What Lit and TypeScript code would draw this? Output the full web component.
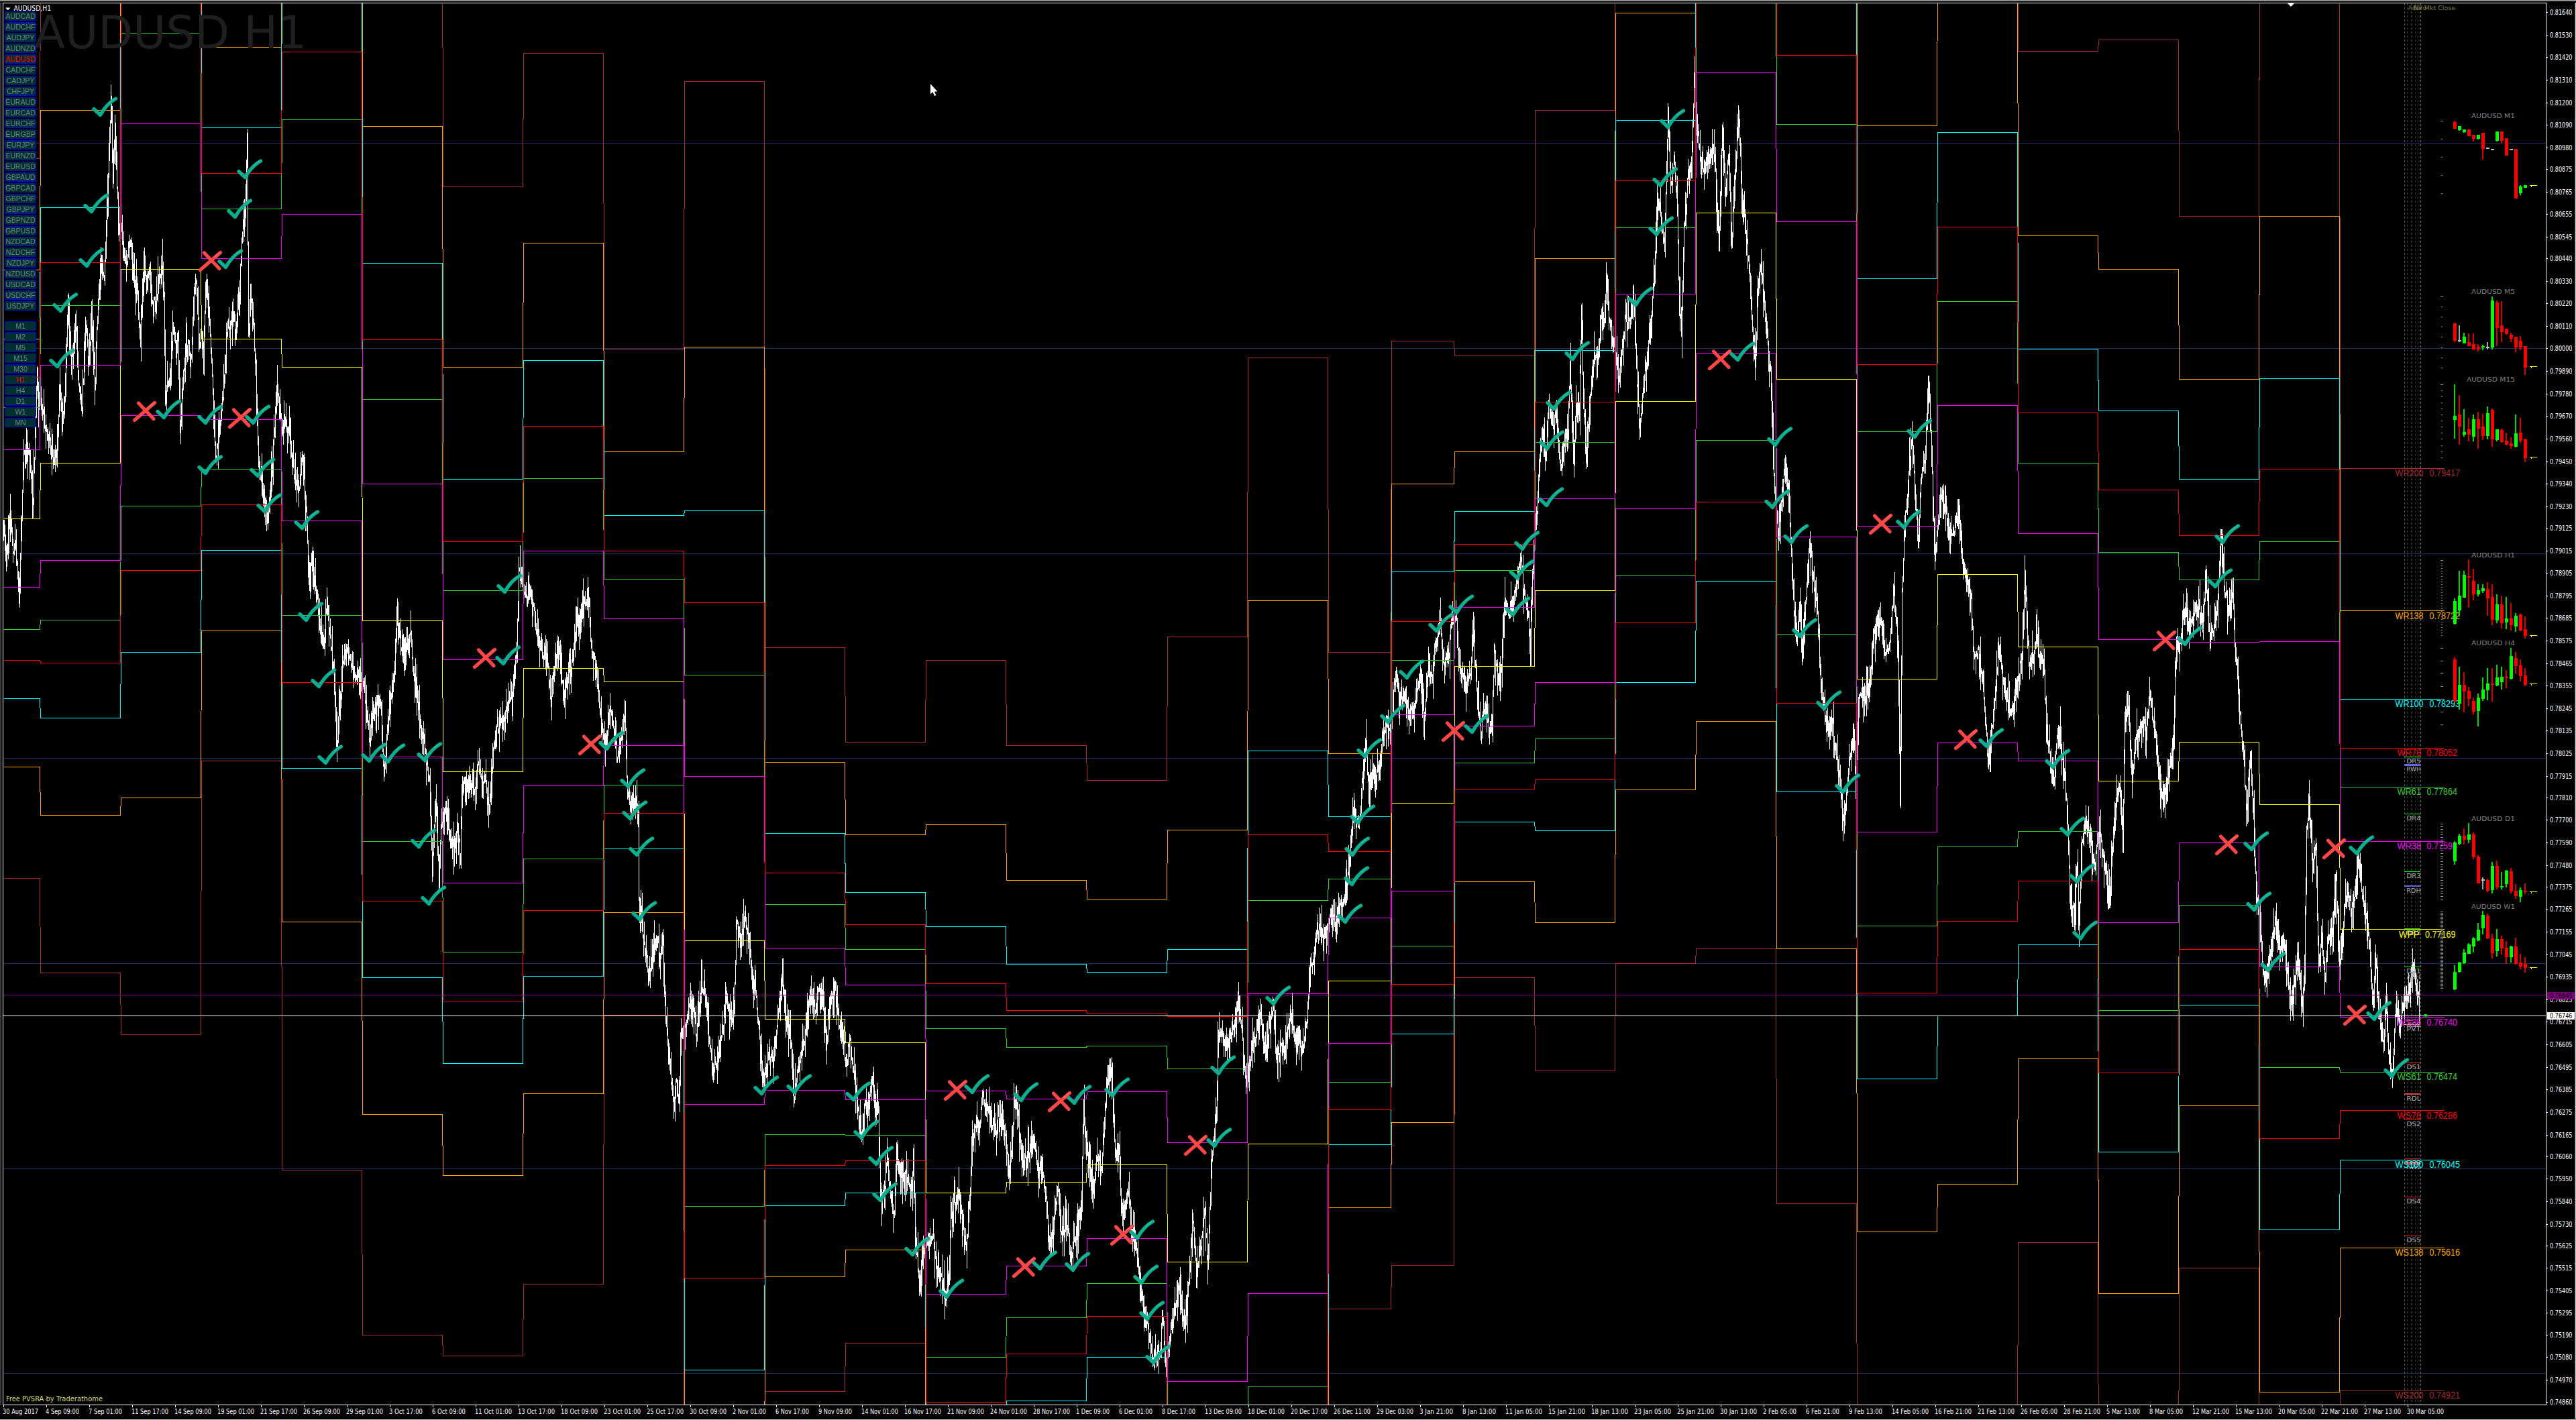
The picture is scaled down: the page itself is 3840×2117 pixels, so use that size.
import { LitElement, html, svg, css } from 'lit';
import { customElement, property, state } from 'lit/decorators.js';
import { classMap } from 'lit/directives/class-map.js';

const PAIRS = ['AUDCAD', 'AUDCHF', 'AUDJPY', 'AUDNZD', 'AUDUSD', 'CADCHF', 'CADJPY', 'CHFJPY', 'EURAUD', 'EURCAD',
    'EURCHF', 'EURGBP', 'EURJPY', 'EURNZD', 'EURUSD', 'GBPAUD', 'GBPCAD', 'GBPCHF', 'GBPJPY', 'GBPNZD', 'GBPUSD',
    'NZDCAD', 'NZDCHF', 'NZDJPY', 'NZDUSD', 'USDCAD', 'USDCHF', 'USDJPY'];

const TIMEFRAMES = ['M1', 'M2', 'M5', 'M15', 'M30', 'H1', 'H4', 'D1', 'W1', 'MN'];

const PRICES = `0.81640 0.81530 0.81420 0.81310 0.81200 0.81090 0.80980 0.80875 0.80765 0.80655 0.80545 0.80440 0.80330
0.80220 0.80110 0.80000 0.79890 0.79780 0.79670 0.79560 0.79450 0.79340 0.79230 0.79125 0.79015 0.78905 0.78795 0.78685
0.78575 0.78465 0.78355 0.78245 0.78135 0.78025 0.77915 0.77810 0.77700 0.77590 0.77480 0.77375 0.77265 0.77155 0.77045
0.76935 0.76825 0.76715 0.76605 0.76495 0.76385 0.76275 0.76165 0.76060 0.75950 0.75840 0.75730 0.75625 0.75515 0.75405
0.75295 0.75190 0.75080 0.74970 0.74860`.split(/\s+/);

const DATES = ['30 Aug 2017', '4 Sep 09:00', '7 Sep 01:00', '11 Sep 17:00', '14 Sep 09:00', '19 Sep 01:00', '21 Sep 17:00',
    '26 Sep 09:00', '29 Sep 01:00', '3 Oct 17:00', '6 Oct 09:00', '11 Oct 01:00', '13 Oct 17:00', '18 Oct 09:00',
    '23 Oct 01:00', '25 Oct 17:00', '30 Oct 09:00', '2 Nov 01:00', '6 Nov 17:00', '9 Nov 09:00', '14 Nov 01:00',
    '16 Nov 17:00', '21 Nov 09:00', '24 Nov 01:00', '28 Nov 17:00', '1 Dec 09:00', '6 Dec 01:00', '8 Dec 17:00',
    '13 Dec 09:00', '18 Dec 01:00', '20 Dec 17:00', '26 Dec 11:00', '29 Dec 03:00', '3 Jan 21:00', '8 Jan 13:00',
    '11 Jan 05:00', '15 Jan 21:00', '18 Jan 13:00', '23 Jan 05:00', '25 Jan 21:00', '30 Jan 13:00', '2 Feb 05:00',
    '6 Feb 21:00', '9 Feb 13:00', '14 Feb 05:00', '16 Feb 21:00', '21 Feb 13:00', '26 Feb 05:00', '28 Feb 21:00',
    '5 Mar 13:00', '8 Mar 05:00', '12 Mar 21:00', '15 Mar 13:00', '20 Mar 05:00', '22 Mar 21:00', '27 Mar 13:00',
    '30 Mar 05:00'];

// weekly pivots: left edge, pivot y, range of the previous week (px)
const WEEKS = [
    [5, 772.7, 268.2], [60, 689.5, 380.2], [180, 401.4, 570.2], [300, 505, 314.6], [420, 547.3, 598.1],
    [540, 924.5, 532.9], [660, 1149.6, 435.8], [780, 996.1, 458.8], [900, 1016.4, 248.4], [1020, 1401.8, 640.5],
    [1140, 1519.4, 277.3], [1260, 1553.9, 224], [1380, 1777.7, 396.7], [1500, 1762.4, 325.6], [1620, 1736.1, 286.8],
    [1740, 1881.4, 466], [1860, 1704.6, 586], [1980, 1461.6, 244.8], [2074, 1196.6, 344.5], [2168, 993.4, 231.8],
    [2288, 880.2, 358], [2408, 598.3, 419], [2528, 317.4, 548.2], [2648, 565.2, 614.5], [2768, 1011.7, 596.4],
    [2888, 855.5, 658.3], [3008, 964.4, 444], [3128, 1164.2, 552.6], [3248, 1106.4, 392], [3368, 1198.6, 634.3],
    [3488, 1385.2, 343.6]
];
const LAST_X = 3644;

// painted in this order, so 78% ends up on top
const LEVELS: [number, string][] = [
    [2, '#a52a2a'], [1.382, '#ffa500'], [1, '#00ffff'], [0, '#ffff00'], [0.618, '#32cd32'], [0.382, '#ff00ff'], [0.786, '#ff0000']
];

const WEEK_LABELS: [string, string, number, string][] = [
    ['WR200', '0.79417', 697.5, '#a52a2a'], ['WR138', '0.78722', 910.5, '#ffa500'], ['WR100', '0.78293', 1041.5, '#00ffff'],
    ['WR78', '0.78052', 1114.5, '#ff0000'], ['WR61', '0.77864', 1172.5, '#32cd32'], ['WR38', '0.77598', 1253.5, '#ff00ff'],
    ['WPP', '0.77169', 1385.5, '#ffff00'], ['WS38', '0.76740', 1516.5, '#ff00ff'], ['WS61', '0.76474', 1597.5, '#32cd32'],
    ['WS78', '0.76286', 1655.5, '#ff0000'], ['WS100', '0.76045', 1728.5, '#00ffff'], ['WS138', '0.75616', 1859.5, '#ffa500'],
    ['WS200', '0.74921', 2072.5, '#a52a2a']
];

const DAY_LABELS: [string, number, string, number][] = [
    ['DR5', 1128.5, '#00ff00', 1], ['RWH', 1140.5, '#6464e6', 3], ['DR4', 1213.5, '#00ff00', 1], ['DR3', 1299.5, '#00ff00', 1],
    ['RDH', 1321, '#6464e6', 2], ['DR2', 1384.5, '#00ff00', 1], ['DR1', 1441.5, '#00ff00', 1], ['ASH', 1450.5, '#6464e6', 1],
    ['ASL', 1521.5, '#e04040', 1], ['PVT', 1527.5, '#ffff00', 1], ['DS1', 1584.5, '#ff0000', 1], ['RDL', 1631, '#e04040', 2],
    ['DS2', 1669.5, '#ff0000', 1], ['DS3', 1727.5, '#ff0000', 1], ['RWL', 1733.5, '#e04040', 3], ['DS4', 1784.5, '#ff0000', 1],
    ['DS5', 1842.5, '#ff0000', 1]
];

const nums = (s: string) => s.trim().split(/[\s,]+/).map(Number);
const pairs = (s: string) => {
    const n = nums(s), out: number[][] = [];
    for (let i = 0; i < n.length; i += 2) out.push([n[i], n[i + 1]]);
    return out;
};

const PATH = pairs(`5,777 9,831 15,764 18,811 23,818 28,895 31,798 35,676 41,676 46,710 49,745 54,581 60,602 63,612 69,642
75,666 84,692 89,575 92,642 96,595 101,448 106,534 112,476 116,554 122,608 127,487 132,534 136,473 141,580 145,473
150,400 155,415 158,350 161,260 165,146 168,257 171,185 176,331 181,338 183,375 188,395 194,360 197,400 200,420 204,430
209,505 214,385 218,430 223,400 228,460 233,440 238,410 242,392 244,440 246,600 250,570 254,560 257,485 262,520 265,500
268,630 271,590 276,520 280,510 283,545 286,510 289,430 292,420 296,510 300,500 303,530 306,425 309,440 313,500 316,560
319,640 322,685 326,640 330,610 334,560 338,500 343,480 347,470 351,505 354,460 357,430 360,360 363,330 366,290 368,207
370,500 373,425 377,480 381,540 384,660 388,710 393,737 399,778 402,744 407,662 413,578 419,642 425,629 433,662 439,710
445,730 451,685 457,784 461,879 464,831 470,879 476,926 482,965 487,892 493,967 497,1000 502,1110 507,1041 513,962 520,980
528,1007 533,1000 540,1014 545,1055 551,1110 557,1057 562,1041 568,1065 572,1155 576,1098 580,1050 586,1014 592,920
598,967 605,960 612,942 617,1014 624,1055 631,1098 635,1138 640,1158 644,1285 650,1199 654,1322 657,1233 664,1199
670,1246 676,1275 681,1240 686,1275 689,1179 696,1165 706,1179 712,1138 718,1179 724,1165 729,1210 733,1145 739,1091
746,1075 754,1057 759,1041 765,1021 770,980 773,850 779,872 785,892 791,880 797,926 804,960 810,980 816,994 820,1040
827,987 834,968 840,1040 846,1007 854,980 860,915 865,940 869,890 877,892 882,980 886,980 892,1041 897,1090 903,1111
909,1060 914,1084 920,1130 926,1098 931,1057 935,1185 941,1199 947,1192 951,1206 952,1341 957,1370 961,1420 967,1455
973,1422 980,1398 983,1440 987,1392 992,1517 996,1557 1003,1640 1007,1611 1012,1640 1015,1544 1021,1530 1027,1500
1032,1485 1038,1550 1045,1462 1053,1496 1061,1600 1070,1571 1078,1530 1082,1480 1087,1517 1094,1510 1097,1380 1105,1409
1110,1360 1116,1395 1122,1476 1126,1483 1131,1530 1136,1611 1142,1605 1146,1564 1153,1580 1159,1517 1166,1455 1172,1517
1179,1557 1183,1642 1188,1598 1194,1571 1198,1557 1202,1523 1208,1485 1214,1510 1220,1476 1226,1490 1231,1562 1237,1496
1244,1466 1251,1530 1255,1537 1261,1584 1267,1550 1272,1591 1278,1652 1284,1696 1289,1645 1295,1652 1299,1608 1304,1645
1309,1652 1312,1787 1318,1790 1322,1715 1327,1785 1333,1808 1336,1735 1344,1753 1352,1760 1359,1774 1361,1730 1365,1855
1371,1922 1376,1868 1382,1855 1390,1845 1396,1889 1402,1902 1408,1932 1414,1909 1417,1801 1423,1794 1430,1780 1434,1834
1440,1862 1445,1787 1449,1706 1454,1679 1460,1679 1465,1634 1469,1659 1477,1665 1483,1690 1491,1662 1498,1692 1505,1750
1509,1679 1514,1630 1518,1679 1523,1730 1529,1733 1535,1715 1541,1696 1547,1750 1552,1730 1558,1774 1564,1862 1570,1821
1577,1775 1583,1848 1589,1810 1595,1875 1601,1848 1607,1834 1612,1787 1615,1642 1619,1720 1626,1753 1630,1770 1635,1730
1642,1740 1647,1652 1652,1590 1658,1632 1662,1720 1668,1720 1671,1807 1678,1801 1682,1775 1687,1845 1693,1855 1699,1909
1704,1956 1711,1976 1717,2024 1723,2026 1730,2003 1732,1955 1737,2032 1740,2017 1746,1976 1751,1949 1757,1922 1763,1968
1769,1956 1774,1882 1777,1810 1783,1899 1789,1861 1795,1803 1800,1880 1805,1747 1809,1699 1814,1638 1815,1537 1821,1544
1828,1560 1834,1544 1840,1530 1846,1485 1850,1530 1855,1591 1860,1610 1866,1557 1873,1530 1878,1512 1886,1568 1892,1530
1897,1495 1903,1583 1909,1557 1916,1560 1924,1512 1930,1544 1936,1544 1942,1568 1947,1530 1952,1449 1958,1422 1962,1388
1970,1388 1976,1395 1982,1366 1990,1384 1996,1361 2002,1348 2008,1314 2013,1260 2017,1208 2025,1230 2031,1165 2036,1105
2040,1176 2048,1152 2056,1152 2062,1091 2066,1070 2072,1100 2077,1030 2082,1007 2086,1045 2094,1034 2101,1073 2106,1055
2112,1028 2118,1012 2123,1072 2129,999 2134,1014 2140,953 2146,930 2152,990 2158,987 2164,926 2170,915 2175,994 2183,1025
2190,1007 2196,942 2201,1028 2207,1092 2213,1050 2219,1088 2224,1075 2227,970 2233,1018 2238,1001 2242,899 2248,916
2256,899 2262,859 2267,832 2271,886 2278,913 2281,970 2284,859 2287,791 2291,764 2294,690 2299,645 2304,680 2308,598
2314,629 2320,622 2326,700 2333,642 2337,649 2340,540 2345,690 2349,608 2354,615 2357,462 2360,608 2365,686 2369,608
2375,541 2382,534 2386,473 2392,473 2395,412 2399,480 2403,514 2408,527 2412,568 2418,514 2423,473 2429,487 2435,450
2440,575 2444,640 2449,581 2455,527 2461,473 2466,406 2470,290 2475,318 2481,370 2486,180 2490,275 2495,235 2499,291
2503,446 2506,500 2510,338 2515,270 2521,257 2525,112 2530,196 2535,255 2542,243 2550,226 2556,243 2562,372 2567,188
2571,288 2577,230 2581,360 2585,270 2591,170 2597,304 2602,345 2607,406 2611,473 2616,545 2620,439 2625,392 2630,460
2636,527 2640,575 2645,730 2651,802 2656,730 2660,690 2666,730 2671,845 2677,955 2682,900 2686,980 2691,899 2697,805
2703,865 2709,913 2714,1014 2718,1048 2724,1088 2731,1077 2737,1131 2743,1179 2749,1224 2754,1165 2758,1125 2763,1090
2766,1185 2770,1048 2775,1034 2781,1041 2787,1021 2792,960 2798,922 2804,926 2810,975 2816,960 2822,880 2829,960 2832,1200
2835,879 2839,777 2844,717 2850,648 2855,757 2859,810 2864,710 2870,676 2874,562 2879,676 2884,826 2890,777 2894,738
2900,757 2907,805 2914,784 2920,755 2925,838 2931,859 2937,886 2942,973 2948,967 2953,1001 2957,1041 2963,1138 2968,1098
2972,1057 2979,965 2985,1014 2991,1034 2997,1060 3003,1041 3009,1014 3014,973 3018,852 3024,992 3031,980 3035,942
3041,980 3047,1001 3050,1084 3057,1145 3061,1170 3066,1098 3070,1085 3075,1145 3080,1192 3083,1260 3086,1354 3092,1360
3096,1287 3099,1378 3103,1253 3109,1225 3115,1240 3121,1292 3127,1242 3133,1267 3139,1300 3145,1348 3148,1273 3153,1199
3158,1172 3164,1238 3167,1084 3171,1032 3178,1165 3182,1104 3188,1098 3194,1070 3199,1102 3204,1030 3208,1070 3213,1098
3219,1176 3223,1190 3230,1165 3236,1131 3240,1098 3242,994 3246,967 3251,946 3257,908 3263,937 3271,913 3277,902 3283,930
3288,850 3294,965 3300,933 3306,892 3311,792 3315,879 3321,910 3328,890 3332,967 3337,1041 3340,1084 3344,1131 3349,1206
3354,1122 3358,1192 3363,1327 3369,1395 3375,1460 3381,1442 3387,1398 3392,1378 3398,1412 3404,1409 3409,1449 3415,1496
3421,1463 3425,1430 3432,1508 3435,1436 3438,1233 3442,1190 3447,1300 3452,1262 3456,1440 3461,1392 3465,1462 3471,1395
3476,1395 3482,1308 3487,1442 3493,1375 3499,1322 3505,1358 3510,1334 3514,1272 3520,1327 3526,1368 3531,1409 3536,1496
3542,1430 3546,1517 3553,1565 3556,1498 3560,1568 3566,1600 3571,1498 3577,1528 3583,1492 3589,1490 3595,1440 3599,1455
3603,1485 3607,1500`);

// tip of every tick mark / centre of every cross
const CHECKS = pairs(`150,175 137,319 130,400 91,467 86,550 366,268 351,327 337,402 245,626 307,634 378,634 307,709 385,713
395,766 451,791 457,928 476,1027 753,886 751,993 2345,539 2317,613 2307,672 2306,757 2270,822 2262,865 2256,920 2172,917
2142,944 2098,1014 2070,1080 2487,193 2476,280 2470,353 2439,458 2591,540 2647,667 2643,760 2671,812 2684,952 2720,1060
2855,655 2839,790 3314,812 3303,878 3258,964 486,1141 551,1138 579,1139 634,1137 625,1266 640,1351 905,1120 937,1176
940,1224 950,1278 954,1374 1136,1634 1185,1632 1273,1643 1285,1700 1307,1739 1313,1793 1361,1874 1412,1937 1450,1632
1523,1644 1602,1648 1659,1637 1551,1895 1600,1897 1696,1849 1702,1916 1711,1970 1720,2035 1811,1712 1817,1604 1899,1500
2006,1378 2016,1322 2017,1278 2025,1230 2035,1131 2195,1095 2748,1184 2962,1116 3061,1147 3083,1248 3097,1318 3102,1403
3357,1270 3361,1360 3382,1450 3514,1276 3540,1523 3566,1608`);
const CROSSES = pairs(`315,390 217,614 359,624 724,982 2565,537 2805,782 3228,956 881,1111 1426,1626 1581,1643 1528,1890
1674,1842 1784,1708 2168,1091 2932,1103 3321,1260 3481,1266 3512,1514`);

interface Mini { name: string; title: number; arrow: number; ruler: number[]; bars: string }

// ruler: first y, step, count, length of a mark; bars: colour,top,bottom,high,low
const MINIS: Mini[] = [
    { name: 'AUDUSD M1', title: 176, arrow: 276.5, ruler: [180, 27, 5, 2], bars: `r,182,192,180,192 g,188,194,188,195
        g,193,197,193,198 r,193,203,193,203 r,201,207,201,211 g,201,207,201,208 r,198,222,198,238 w,220,222,220,222
        w,222,224,222,224 g,196,210,196,211 r,196,210,196,214 r,206,232,206,232 w,222,224,222,224 r,222,296,222,296
        g,278,288,276,291 g,276,280,276,280` },
    { name: 'AUDUSD M5', title: 438, arrow: 546.5, ruler: [442, 15.1, 8, 2], bars: `r,482,508,482,510 w,507,509,485,510
        g,502,512,496,512 r,510,516,497,516 r,513,521,497,522 r,517,521,513,524 g,516,518,514,522 w,517,519,510,521
        g,448,518,442,521 r,451,489,448,516 r,485,495,449,510 r,490,498,490,499 r,499,505,496,510 r,502,518,502,525
        r,508,518,501,522 r,516,548,516,559` },
    { name: 'AUDUSD M15', title: 569, arrow: 681.5, ruler: [573, 9.05, 13, 2], bars: `g,620,626,573,654 r,618,636,589,663
        g,644,648,610,651 r,640,648,623,658 g,625,651,618,658 r,625,639,614,669 r,636,650,617,656 g,616,650,606,655
        r,611,655,609,666 g,640,656,640,658 r,641,659,639,660 r,657,663,645,664 r,661,665,652,669 g,646,666,618,667
        r,645,657,623,660 r,655,683,654,689` },
    { name: 'AUDUSD H1', title: 831, arrow: 947.5, ruler: [835, 4, 29, 2], bars: `g,896,930,892,931 g,888,910,851,919
        g,857,891,851,891 r,859,861,834,906 r,866,886,848,895 g,880,886,871,889 g,877,881,871,884 r,878,892,868,918
        r,890,924,871,932 g,901,925,886,929 r,901,929,888,937 g,922,928,890,938 r,922,932,899,940 g,918,934,914,942
        r,916,940,915,941 r,938,948,919,952` },
    { name: 'AUDUSD H4', title: 962, arrow: 1019.5, ruler: [966, 19, 7, 4], bars: `r,983,1046,980,1047 g,1021,1049,994,1058
        r,1021,1031,1002,1062 r,1030,1042,1024,1053 r,1045,1061,1040,1065 g,1040,1060,1034,1083 g,1028,1042,1010,1045
        g,1019,1029,996,1044 r,1019,1021,996,1046 g,1010,1022,991,1023 g,1009,1017,994,1028 r,1009,1011,999,1026
        g,978,1012,966,1013 r,981,993,972,1005 r,992,1008,983,1016 r,1007,1021,996,1023` },
    { name: 'AUDUSD D1', title: 1224, arrow: 1329.5, ruler: [1228, 4, 29, 4], bars: `g,1256,1284,1254,1289 g,1246,1258,1243,1260
        r,1246,1252,1235,1259 g,1244,1252,1227,1257 r,1244,1278,1241,1281 r,1277,1317,1275,1317 w,1311,1313,1308,1326
        r,1312,1328,1310,1330 g,1291,1327,1285,1332 r,1291,1323,1283,1326 g,1321,1323,1300,1326 g,1298,1318,1297,1323
        r,1299,1329,1294,1332 r,1328,1336,1318,1340 g,1327,1337,1323,1345 r,1328,1330,1317,1333` },
    { name: 'AUDUSD W1', title: 1355, arrow: 1442.5, ruler: [1359, 2, 58, 4], bars: `g,1449,1475,1439,1476 g,1435,1449,1434,1450
        g,1420,1436,1415,1437 g,1408,1422,1406,1422 g,1399,1411,1397,1420 g,1386,1402,1376,1403 g,1364,1384,1358,1393
        r,1365,1399,1362,1400 r,1399,1421,1392,1429 g,1400,1418,1385,1426 r,1400,1414,1395,1423 r,1413,1427,1403,1437
        g,1411,1427,1410,1435 r,1411,1437,1398,1438 r,1435,1441,1422,1445 r,1437,1443,1427,1450` }
];
const BAR_FILL: Record<string, string> = { r: '#ff0000', g: '#00ff00', w: '#c0c0c0' };

const priceY = (p: number) => 18.25 + (0.8164 - p) * 30563;

// one vertical stroke per hourly bar
function priceBars() {
    let seed = 7, d = '', prev = PATH[0][1];
    const rnd = () => (seed = (seed * 16807) % 2147483647) / 2147483647;
    for (let i = 0; i < PATH.length - 1; i++) {
        const [x0, y0] = PATH[i], [x1, y1] = PATH[i + 1];
        for (let x = x0; x < x1; x++) {
            // turning points stay where they are, only the way between them is shaken
            const mid = y0 + (y1 - y0) * (x - x0) / (x1 - x0) + (x > x0 ? (rnd() - 0.5) * 26 : 0);
            const up = Math.min(mid, prev) - rnd() ** 3 * 34 - 2;
            const down = Math.max(mid, prev) + rnd() ** 3 * 34 + 2;
            d += `M${x + 0.5} ${Math.round(up)}V${Math.round(down)}`;
            prev = mid;
        }
    }
    return d;
}

// stepped line through all weeks for one fibo ratio, k is -1 above and 1 below the pivot
function levelLine(ratio: number, k: number) {
    return WEEKS.map(([x, pp, range], i) => {
        const y = Math.round(pp + k * ratio * range) + 0.5;
        const end = i < WEEKS.length - 1 ? WEEKS[i + 1][0] - 0.5 : LAST_X;
        return `${i ? 'L' : 'M'}${x + 0.5} ${y}L${end} ${y}`;
    }).join('');
}

@customElement('side-button')
class SideButton extends LitElement {
    @property({ type: Boolean }) active = false;

    static styles = css`
        :host {
            display: block;
        }
        .btn {
            box-sizing: border-box;
            width: 47px;
            height: 14px;
            border: 1px solid #0000d8;
            border-radius: 2px;
            background: #002f2f;
            color: #6f8488;
            font: 10.6px/13px "Liberation Sans", Arial, sans-serif;
            text-align: center;
            white-space: nowrap;
        }
        .btn.active {
            color: #ff0000;
        }
    `;

    render() {
        return html`<div class=${classMap({ btn: true, active: this.active })}><slot></slot></div>`;
    }
}

@customElement('app-root')
class AppRoot extends LitElement {
    @state() symbol = 'AUDUSD';
    @state() timeframe = 'H1';

    static styles = css`
        :host {
            display: block;
            width: 3840px;
            height: 2117px;
            overflow: hidden;
            background: #000;
        }
        .terminal {
            position: relative;
            display: grid;
            grid-template-columns: 4px 3792px 44px;
            grid-template-rows: 4px 2091px 22px;
            height: 100%;
        }
        .top {
            grid-column: 1 / 4;
            background: linear-gradient(#a0a0a0 0 1px, #696969 1px 2px, #000 2px);
        }
        .edge {
            background: linear-gradient(90deg, #303030 0 1px, #505050 1px 2px, #000 2px);
        }
        .dates {
            grid-column: 1 / 4;
            border-bottom: 1px solid #d0d0d0;
            box-sizing: border-box;
        }
        svg {
            display: block;
            overflow: visible;
        }
        .crisp {
            shape-rendering: crispEdges;
            fill: none;
        }
        .axis {
            font: 11px "DejaVu Sans Condensed", "DejaVu Sans", sans-serif;
            fill: #fff;
        }
        .price {
            font: 10px "DejaVu Sans Condensed", "Liberation Sans", sans-serif;
        }
        .small {
            font: 9px "DejaVu Sans", sans-serif;
        }
        .pivot {
            font: 14px "Liberation Sans", Arial, sans-serif;
        }
        .watermark {
            font: 67px "DejaVu Sans", sans-serif;
            fill: #1f1f1f;
        }
        .panel {
            position: absolute;
            left: 7px;
            top: 17px;
            display: flex;
            flex-direction: column;
            gap: 16px;
        }
        .group {
            display: flex;
            flex-direction: column;
            gap: 2px;
        }
    `;

    fit(text: string, x: number, y: number, width: number, cls: string, fill = '') {
        return svg`<text class=${cls} x=${x} y=${y} textLength=${width} lengthAdjust="spacingAndGlyphs"
            style=${fill ? `fill:${fill}` : ''}>${text}</text>`;
    }

    renderMini(m: Mini) {
        const bars = m.bars.trim().split(/\s+/).map((b) => b.split(','));
        const [first, step, count, len] = m.ruler;
        const width = m.name.length > 9 ? 72 : 65;
        return svg`
            ${this.fit(m.name, 3749 - width, m.title, width, 'small', '#808080')}
            ${Array.from({ length: count }, (_, i) => svg`
                <rect x=${len > 2 || !i ? 3638 : 3639} y=${Math.round(first + i * step)} width=${i ? len : 4} height="1" fill="#8a8a8a"/>`)}
            ${bars.map(([c, top, bottom, high, low], i) => svg`
                <rect x=${3658 + i * 7} y=${high} width="2" height=${+low - +high} fill=${BAR_FILL[c]} opacity="0.85"/>
                <rect x=${3657 + i * 7} y=${top} width="5" height=${+bottom - +top} fill=${BAR_FILL[c]}/>`)}
            <path class="crisp" d="M3771 ${m.arrow}H3782M3773.5 ${m.arrow - 1}V${m.arrow + 2}" stroke="#ffff00"/>
        `;
    }

    renderWeekLabel([name, value, y, color]: [string, string, number, string]) {
        const wide = name.length === 5, pp = name.length === 3;
        const x = wide ? 3570.5 : pp ? 3576 : 3573.5;
        return svg`
            ${this.fit(name, x, y + 12, wide ? 42 : pp ? 30.5 : 35.5, 'pivot', color)}
            ${this.fit(value, wide ? 3621.5 : pp ? 3615 : 3617.5, y + 12, 45.5, 'pivot', color)}
        `;
    }

    renderPlot() {
        const mirrored = [-1, 1];
        return svg`
            <svg width="3792" height="2091" viewBox="4 4 3792 2091" style="overflow:hidden">
                <defs>
                    <g id="check">
                        <path d="M-9.5 -10.5L0.5 -1.5C6 -12 13 -20 24 -26.5" fill="none" stroke="#000" stroke-opacity="0.3" stroke-width="5" stroke-linecap="round" stroke-linejoin="round"/>
                        <path d="M-10 -12.5L-0.5 -3.5C5 -13.5 12 -22 22.5 -28" fill="none" stroke="#08ae90" stroke-width="5.4" stroke-linecap="round" stroke-linejoin="round"/>
                        <path d="M12.5 -21.5L21 -28" fill="none" stroke="#2fbfa2" stroke-width="1.3" stroke-linecap="round"/>
                    </g>
                    <g id="cross">
                        <path d="M-9 -11.5L13.5 12M15 -12L-15 14" transform="translate(-0.5 -0.5)" stroke="#ff4646" stroke-width="5.2" stroke-linecap="round"/>
                        <path d="M6 -6L13.5 -12.5" stroke="#ff6c6c" stroke-width="1.2" stroke-linecap="round"/>
                    </g>
                </defs>
                <g class="crisp">
                    ${[0.81, 0.8, 0.79, 0.78, 0.77, 0.76, 0.75].map((p) => svg`
                        <path d="M5 ${Math.floor(priceY(p)) + 0.5}H3796" stroke="#1e3058"/>`)}
                    ${[[3584.5, '#5c5c5c', 1], [3588.5, '#303030', 1], [3595, '#303030', 2], [3600.5, '#303030', 1],
                        [3604.5, '#303030', 1], [3607.5, '#303030', 1], [3608.5, '#5c5c5c', 1]].map(([x, c, w]) => svg`
                        <path d="M${x} 5V2094" stroke=${c} stroke-width=${w} stroke-dasharray="3 3"/>`)}
                    <path d=${priceBars()} stroke="#fff"/>
                    ${LEVELS.map(([r, c]) => mirrored.map((k) => r || k > 0 ? svg`
                        <path d=${levelLine(r, k)} stroke=${c}/>` : ''))}
                    <path d="M5 1483.5H3796" stroke="#800080"/>
                    <path d="M5 1514.5H3796" stroke="#fff"/>
                    ${DAY_LABELS.map(([name, y, c, w]) => svg`
                        <path d="M${name[0] === 'A' ? 3588 : 3584} ${y}H${name[0] === 'A' ? 3597 : 3608}" stroke=${c} stroke-width=${w}/>`)}
                </g>
                ${DAY_LABELS.map(([name, y]) => this.fit(name, 3587.5, Math.floor(y) + 9.5, 21, 'small', '#b0b0b0'))}
                ${WEEK_LABELS.map((l) => this.renderWeekLabel(l))}
                <path d="M3613 1514.5A2.8 2.8 0 0 1 3618.6 1514.5V1515.5H3613Z" fill="#00ff00"/>
                ${CHECKS.map(([x, y]) => svg`<use href="#check" x=${x} y=${y}/>`)}
                ${CROSSES.map(([x, y]) => svg`<use href="#cross" x=${x - 1} y=${y - 1}/>`)}
                ${MINIS.map((m) => this.renderMini(m))}
                ${this.fit('Asia', 3589.5, 15, 19, 'small', '#6b6b3a')}
                ${this.fit('Euro', 3597, 15, 20, 'small', '#6b6b3a')}
                ${this.fit('NY Mkt Close', 3598, 15, 62, 'small', '#7d7d45')}
                ${this.fit(`${this.symbol} ${this.timeframe}`, 51, 72, 406, 'watermark')}
                ${this.fit(`${this.symbol},${this.timeframe}`, 20.5, 16, 55.5, 'axis')}
                <path d="M8 11.5H15.5L11.75 15.3Z" fill="#fff"/>
                <path d="M3410 5H3420L3415 10Z" fill="#fff"/>
                ${this.fit('Free PVSRA by Traderathome', 9, 2088.5, 144, 'axis', '#d5d96a')}
                <path d="M1387 125V140.5L1390.5 137.2L1393 143L1395.4 142L1393 136.4H1397.5Z" fill="#fff"/>
                <path class="crisp" d="M4.5 2095V4.5H3795.5V2094.5H4.5" stroke="#fff"/>
            </svg>
        `;
    }

    renderPriceAxis() {
        const label = (p: string, fill: string) => this.fit(p, 3801, Math.round(priceY(+p)) + 4, 33.5, 'price', fill);
        return svg`
            <svg width="44" height="2091" viewBox="3796 4 44 2091">
                ${PRICES.map((p) => svg`
                    <rect x="3796" y=${Math.round(priceY(+p))} width="2" height="1" fill="#fff"/>
                    ${label(p, '#fff')}`)}
                <rect x="3797" y="1479" width="41" height="11" fill="#800080"/>
                ${label('0.76845', '#000')}
                <rect x="3797" y="1509" width="41" height="11" fill="#fff"/>
                ${label('0.76746', '#000')}
                <rect x="3838" y="4" width="1" height="2111" fill="#505050"/>
                <rect x="3839" y="4" width="1" height="2111" fill="#d0d0d0"/>
            </svg>
        `;
    }

    renderDateAxis() {
        return svg`
            <svg width="3840" height="22" viewBox="0 2095 3840 22">
                ${DATES.map((d, i) => svg`
                    <rect x=${5 + i * 64} y="2095" width="1" height="3" fill="#fff"/>
                    ${this.fit(d, 4 + i * 64, 2107.5, d.length === 12 ? 55 : i ? 50 : 53, 'axis')}`)}
            </svg>
        `;
    }

    renderGroup(items: string[], current: string, select: (v: string) => void) {
        return html`
            <div class="group">
                ${items.map((v) => html`<side-button ?active=${v === current} @click=${() => select(v)}>${v}</side-button>`)}
            </div>
        `;
    }

    render() {
        return html`
            <div class="terminal">
                <div class="top"></div>
                <div class="edge"></div>
                <div class="plot">${this.renderPlot()}</div>
                <div class="prices">${this.renderPriceAxis()}</div>
                <div class="dates">${this.renderDateAxis()}</div>
                <div class="panel">
                    ${this.renderGroup(PAIRS, this.symbol, (v) => this.symbol = v)}
                    ${this.renderGroup(TIMEFRAMES, this.timeframe, (v) => this.timeframe = v)}
                </div>
            </div>
        `;
    }
}
